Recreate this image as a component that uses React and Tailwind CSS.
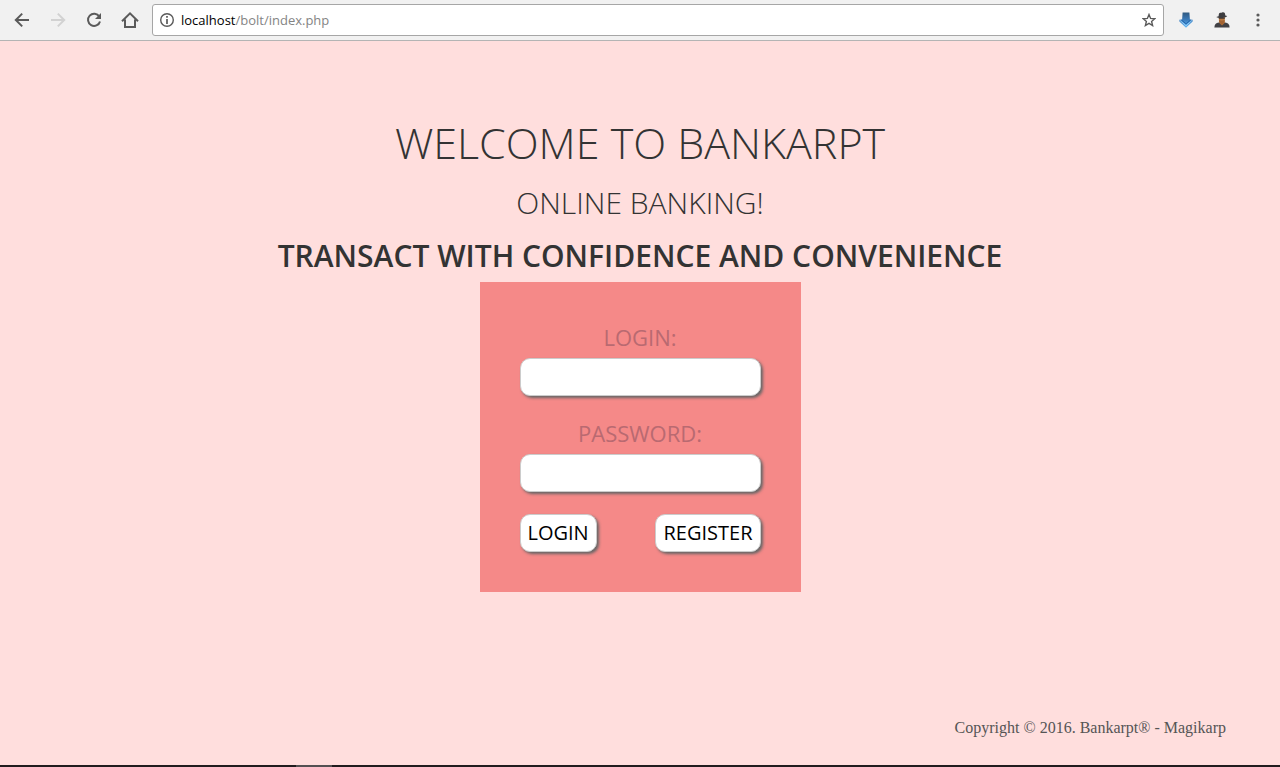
import React from "react";

const shadow = "border border-[#ccc] shadow-[2px_2px_3px_#666] rounded-[10px] bg-white";

function ToolButton({ label, children, muted }) {
  return (
    <button
      type="button"
      aria-label={label}
      disabled={muted}
      className={"flex size-9 items-center justify-center " + (muted ? "text-[#d2d2d2]" : "text-[#5a5a5a]")}
    >
      {children}
    </button>
  );
}

function Arrow({ flip }) {
  return (
    <svg width="16" height="16" viewBox="0 0 16 16" className={flip ? "-scale-x-100" : ""} fill="none" stroke="currentColor" strokeWidth="2">
      <path d="M15 8H2.5M8.2 1.6 1.8 8l6.4 6.4" />
    </svg>
  );
}

function BrowserBar() {
  return (
    <header className="flex h-[41px] items-center border-b border-[#b4b4b4] bg-[#f1f1f1] pl-1 pr-1">
      <ToolButton label="Back"><Arrow /></ToolButton>
      <ToolButton label="Forward" muted><Arrow flip /></ToolButton>
      <ToolButton label="Reload">
        <svg width="16" height="16" viewBox="0 0 16 16" fill="none">
          <path d="M13.3 4.6A6.1 6.1 0 1 0 14 9.4" stroke="currentColor" strokeWidth="2" />
          <path d="M15 1v6H9z" fill="currentColor" />
        </svg>
      </ToolButton>
      <ToolButton label="Home">
        <svg width="18" height="16" viewBox="0 0 18 16" fill="none" stroke="currentColor" strokeWidth="2">
          <path d="M1 9.2 9 1.4l8 7.8M4 7.5V15h10V7.5" />
        </svg>
      </ToolButton>
      <form className="ml-1 flex h-8 grow items-center rounded-[3px] border border-[#a6a6a6] bg-white pl-[7px] pr-[7px] text-[#5a5a5a]">
        <svg width="14" height="14" viewBox="0 0 14 14" fill="none">
          <circle cx="7" cy="7" r="6.3" stroke="currentColor" strokeWidth="1.4" />
          <path d="M7 3v1.8M7 6v5" stroke="currentColor" strokeWidth="1.7" />
        </svg>
        <a href="#page" className="ml-[7px] grow pt-0.5 font-['Open_Sans',sans-serif] text-[13px] text-[#848484]">
          <span className="text-black">localhost</span>/bolt/index.php
        </a>
        <button type="button" aria-label="Bookmark this page">
          <svg width="14" height="14" viewBox="0 0 14 14" fill="none" stroke="currentColor" strokeWidth="1.4">
            <path d="m7 1.5 1.6 3.9 4.2.3-3.2 2.7 1 4.1L7 10.3l-3.6 2.2 1-4.1L1.2 5.7l4.2-.3z" />
          </svg>
        </button>
      </form>
      <div className="ml-1 flex">
        <ToolButton label="Downloads">
          <svg width="14" height="16" viewBox="0 0 14 16">
            <defs>
              <linearGradient id="arrow-fill" x1="0" y1="0" x2="0" y2="1">
                <stop offset="0" stopColor="#31597f" />
                <stop offset=".5" stopColor="#3b7cbc" />
                <stop offset="1" stopColor="#62b9fa" />
              </linearGradient>
            </defs>
            <path d="M3.6.4h6.8l.5 7 2.7.3v1.8L7 15.7.4 9.5V7.7l2.7-.3z" fill="url(#arrow-fill)" />
            <path d="M.8 8.2 7 13.8l6.2-5.6" fill="none" stroke="#a3d5fa" strokeWidth=".8" />
            <path d="M2.6 8 7 11.8 11.4 8" fill="none" stroke="#2467ae" />
          </svg>
        </ToolButton>
        <ToolButton label="Profile">
          <svg width="16" height="16" viewBox="0 0 16 16">
            <path d="M.4 15.6c0-3.2 1.5-4.5 4.4-5.1h6.4c2.9.6 4.4 1.9 4.4 5.1z" fill="#414145" />
            <path d="M4.8 5h6v5.8L8 13.4l-3-2.8z" fill="#b97a43" />
            <path d="m5 8 2.8.8 2.8-.8-.2 2.9L8 13.2l-2.6-2.4z" fill="#a36332" />
            <path d="M4.8 5.6h6v1.2h-6z" fill="#4b3a30" />
            <path d="M4.6 4.2C4.9 1.3 5.2.5 6.8.8c1 .3 1.3-.8 3-.4 1.3.2 1.3 1.5 1.5 3.2l1.9.3c-1.6 2.2-8.3 3-10.9 1z" fill="#3d3d40" />
          </svg>
        </ToolButton>
        <ToolButton label="Menu">
          <svg width="4" height="14" viewBox="0 0 4 14" fill="currentColor">
            <circle cx="2" cy="2" r="1.6" /><circle cx="2" cy="7" r="1.6" /><circle cx="2" cy="12" r="1.6" />
          </svg>
        </ToolButton>
      </div>
    </header>
  );
}

function Field({ id, label, type }) {
  return (
    <div className="flex flex-col">
      <label htmlFor={id} className="pb-0.5 text-center text-[22px] leading-[38px] text-[#b96a71]">{label}</label>
      <input id={id} type={type} className={"h-[38px] w-full px-2 text-xl outline-none " + shadow} />
    </div>
  );
}

export default function App() {
  return (
    <div className="flex min-h-screen flex-col bg-[#ffdedd] font-['Open_Sans',sans-serif]">
      <BrowserBar />
      <main id="page" className="flex grow flex-col items-center pt-[72px] text-center text-[#333]">
        <h1 className="text-[43px] font-light leading-[60px]">WELCOME TO BANKARPT</h1>
        <h2 className="mt-2 text-[30px] font-light leading-[44px]">ONLINE BANKING!</h2>
        <h3 className="mt-[9px] text-[30px] font-semibold leading-[44px]">TRANSACT WITH CONFIDENCE AND CONVENIENCE</h3>
        <form className="mt-1 flex w-[321px] flex-col bg-[#f58988] px-10 pb-10 pt-9">
          <Field id="login" label="LOGIN:" type="text" />
          <div className="mt-[18px]"><Field id="password" label="PASSWORD:" type="password" /></div>
          <div className="mt-[22px] flex justify-between text-[20px] text-black">
            <button type="submit" className={"h-[38px] px-[7px] " + shadow}>LOGIN</button>
            <button type="button" className={"h-[38px] px-[7px] " + shadow}>REGISTER</button>
          </div>
        </form>
      </main>
      <footer className="flex flex-col">
        <p className="pb-[25px] pr-[54px] text-right font-['Liberation_Serif',serif] text-base leading-6 text-[#555]">
          Copyright © 2016. Bankarpt® - Magikarp
        </p>
        <div className="flex h-0.5 bg-[#211b1d] pl-[296px]">
          <span className="w-9 bg-[#544f51]" />
        </div>
      </footer>
    </div>
  );
}
